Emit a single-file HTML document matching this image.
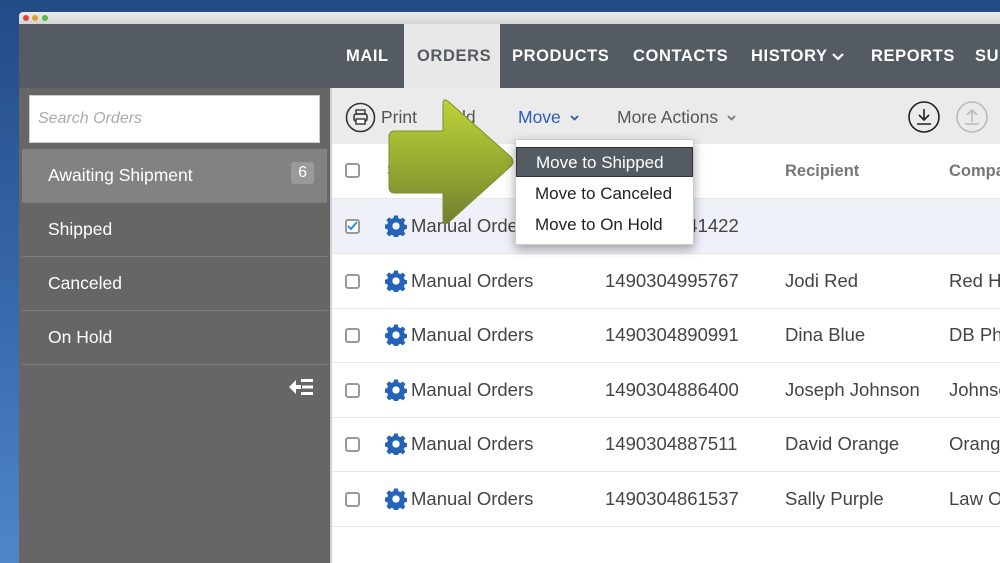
<!DOCTYPE html>
<html><head><meta charset="utf-8"><style>
*{margin:0;padding:0;box-sizing:border-box}
body{width:1000px;height:563px;overflow:hidden;position:relative;font-family:"Liberation Sans",sans-serif;background:linear-gradient(180deg,#234b86 0%,#3a6cb0 60%,#4f86c8 100%)}
.abs{position:absolute}
.title{left:19px;top:12px;width:981px;height:12px;background:linear-gradient(#ececec,#d4d4d4);border-radius:4px 0 0 0}
.dot{top:15px;width:6px;height:6px;border-radius:50%}
.nav{left:19px;top:24px;width:981px;height:64px;background:#555b62}
.nt{position:absolute;top:47px;color:#fff;font-weight:bold;font-size:16.5px;letter-spacing:.6px;white-space:nowrap}
.tab{left:404px;top:24px;width:96px;height:64px;background:#e8e8e8}
.side{left:19px;top:88px;width:311px;height:475px;background:#666}
.search{left:29px;top:95px;width:291px;height:48px;background:#fff;border:1px solid #ccc;color:#aaa;font-style:italic;font-size:16px;padding:14px 8px}
.item{left:22px;width:305px;height:54px;color:#fff;font-size:17.5px;padding:16px 26px;border-bottom:1px solid #7d7d7d}
.main{left:330px;top:88px;width:670px;height:475px;background:#fff;border-left:2px solid #d0d0d0}
.tool{left:332px;top:88px;width:668px;height:56px;background:#ebebeb}
.tt{top:107px;font-size:17.5px;color:#555}
.row{left:332px;width:668px;height:55px;border-bottom:1px solid #e6e6e6}
.cb{position:absolute;left:13px;top:20px;width:15px;height:15px;border:2px solid #999;border-radius:3px;background:#fff}
.cell{position:absolute;top:16px;font-size:18.5px;color:#444;white-space:nowrap}
.gear{position:absolute;left:53px;top:16px}
.menu{left:515px;top:139px;width:179px;height:106px;background:#fff;border:1px solid #ccc;box-shadow:0 4px 10px rgba(0,0,0,.35)}
.mi{position:absolute;left:0;width:177px;height:30px;font-size:17px;color:#222;padding:5px 19px}
</style></head><body>
<div class="abs title"></div>
<div class="abs dot" style="left:23px;background:#e0443c"></div>
<div class="abs dot" style="left:32px;background:#e0a42a"></div>
<div class="abs dot" style="left:42px;background:#5bb644"></div>
<div class="abs nav"></div>
<div class="abs tab"></div>
<div class="nt" style="left:346px">MAIL</div>
<div class="nt" style="left:417px;color:#555b62">ORDERS</div>
<div class="nt" style="left:512px">PRODUCTS</div>
<div class="nt" style="left:633px">CONTACTS</div>
<div class="nt" style="left:751px">HISTORY</div>
<svg class="abs" style="left:832px;top:53px" width="12" height="8"><path d="M1 1 L6 6 L11 1" stroke="#fff" stroke-width="2.2" fill="none"/></svg>
<div class="nt" style="left:871px">REPORTS</div>
<div class="nt" style="left:975px">SU</div>
<div class="abs side"></div>
<div class="abs search">Search Orders</div>
<div class="abs item" style="top:149px;background:#828282">Awaiting Shipment<span style="position:absolute;right:13px;top:13px;background:#9a9a9a;border-radius:3px;padding:2px 7px;font-size:16px">6</span></div>
<div class="abs item" style="top:203px">Shipped</div>
<div class="abs item" style="top:257px">Canceled</div>
<div class="abs item" style="top:311px">On Hold</div>
<svg class="abs" style="left:289px;top:378px" width="25" height="18" viewBox="0 0 25 18"><path d="M0 9 L7 2 L7 7 L12 7 L12 11 L7 11 L7 16Z" fill="#fff"/><rect x="12" y="1" width="12" height="3" fill="#fff"/><rect x="13" y="7.5" width="11" height="3" fill="#fff"/><rect x="12" y="14" width="12" height="3" fill="#fff"/></svg>
<div class="abs main"></div>
<div class="abs tool"></div>
<svg class="abs" style="left:345px;top:102px" width="31" height="31"><circle cx="15.5" cy="15.5" r="14" fill="none" stroke="#333" stroke-width="1.6"/><rect x="9" y="12" width="13" height="7" rx="2" fill="none" stroke="#333" stroke-width="1.5"/><rect x="11" y="8" width="9" height="4" fill="none" stroke="#333" stroke-width="1.4"/><rect x="11" y="17" width="9" height="5" fill="#fff" stroke="#333" stroke-width="1.4"/></svg>
<div class="abs tt" style="left:381px">Print</div>
<div class="abs tt" style="left:462px">ld</div>
<div class="abs tt" style="left:518px;color:#2a5db0">Move</div>
<svg class="abs" style="left:570px;top:115px" width="9" height="6"><path d="M1 1 L4.5 4.5 L8 1" stroke="#2a5db0" stroke-width="1.8" fill="none"/></svg>
<div class="abs tt" style="left:617px">More Actions</div>
<svg class="abs" style="left:727px;top:115px" width="9" height="6"><path d="M1 1 L4.5 4.5 L8 1" stroke="#777" stroke-width="1.8" fill="none"/></svg>
<svg class="abs" style="left:907px;top:100px" width="34" height="34"><circle cx="17" cy="17" r="15" fill="none" stroke="#222" stroke-width="1.6"/><path d="M17 9 V20 M12 15 L17 20 L22 15 M10 24 H24" fill="none" stroke="#222" stroke-width="1.6"/></svg>
<svg class="abs" style="left:955px;top:100px" width="34" height="34"><circle cx="17" cy="17" r="15" fill="none" stroke="#bbb" stroke-width="1.6"/><path d="M17 22 V10 M12 15 L17 10 L22 15 M10 24 H24" fill="none" stroke="#bbb" stroke-width="1.6"/></svg>

<div class="abs row" style="top:144px"><div class="cb" style="top:19px"></div><div class="cell" style="left:55px;font-weight:bold;color:#777;font-size:16px;top:18px">S</div><div class="cell" style="left:453px;font-weight:bold;color:#777;font-size:16.5px;top:18px">Recipient</div><div class="cell" style="left:617px;font-weight:bold;color:#777;font-size:16.5px;top:18px">Compa</div></div>
<div class="abs row" style="top:199px;background:#eef1f8"><div class="cb" style="border-color:#999"><svg width="11" height="11" style="position:absolute;left:0;top:0"><path d="M1 5 L4 8 L10 1" stroke="#2a8fd8" stroke-width="2" fill="none"/></svg></div><svg class="gear" width="22" height="22" viewBox="0 0 24 24"><path fill="#2563b8" d="M10 1h4l.6 3 2.2 1 2.6-1.7 2.8 2.8L20.5 8.8l1 2.2 3 .6v4l-3 .6-1 2.2 1.7 2.6-2.8 2.8-2.6-1.7-2.2 1-.6 3h-4l-.6-3-2.2-1-2.6 1.7L1.6 20.6 3.3 18l-1-2.2-3-.6v-4l3-.6 1-2.2L1.6 5.9 4.4 3.1 7 4.8l2.2-1z" transform="translate(0 -.5)"/><circle cx="12" cy="12" r="4" fill="#eef1f8"/></svg><div class="cell" style="left:79px">Manual Orders</div><div class="cell" style="left:273px">1490304841422</div></div>
<div class="abs row" style="top:254px"><div class="cb"></div><svg class="gear" width="22" height="22" viewBox="0 0 24 24"><path fill="#2563b8" d="M10 1h4l.6 3 2.2 1 2.6-1.7 2.8 2.8L20.5 8.8l1 2.2 3 .6v4l-3 .6-1 2.2 1.7 2.6-2.8 2.8-2.6-1.7-2.2 1-.6 3h-4l-.6-3-2.2-1-2.6 1.7L1.6 20.6 3.3 18l-1-2.2-3-.6v-4l3-.6 1-2.2L1.6 5.9 4.4 3.1 7 4.8l2.2-1z" transform="translate(0 -.5)"/><circle cx="12" cy="12" r="4" fill="#fff"/></svg><div class="cell" style="left:79px">Manual Orders</div><div class="cell" style="left:273px">1490304995767</div><div class="cell" style="left:453px">Jodi Red</div><div class="cell" style="left:617px">Red H</div></div>
<div class="abs row" style="top:308px"><div class="cb"></div><svg class="gear" width="22" height="22" viewBox="0 0 24 24"><path fill="#2563b8" d="M10 1h4l.6 3 2.2 1 2.6-1.7 2.8 2.8L20.5 8.8l1 2.2 3 .6v4l-3 .6-1 2.2 1.7 2.6-2.8 2.8-2.6-1.7-2.2 1-.6 3h-4l-.6-3-2.2-1-2.6 1.7L1.6 20.6 3.3 18l-1-2.2-3-.6v-4l3-.6 1-2.2L1.6 5.9 4.4 3.1 7 4.8l2.2-1z" transform="translate(0 -.5)"/><circle cx="12" cy="12" r="4" fill="#fff"/></svg><div class="cell" style="left:79px">Manual Orders</div><div class="cell" style="left:273px">1490304890991</div><div class="cell" style="left:453px">Dina Blue</div><div class="cell" style="left:617px">DB Ph</div></div>
<div class="abs row" style="top:363px"><div class="cb"></div><svg class="gear" width="22" height="22" viewBox="0 0 24 24"><path fill="#2563b8" d="M10 1h4l.6 3 2.2 1 2.6-1.7 2.8 2.8L20.5 8.8l1 2.2 3 .6v4l-3 .6-1 2.2 1.7 2.6-2.8 2.8-2.6-1.7-2.2 1-.6 3h-4l-.6-3-2.2-1-2.6 1.7L1.6 20.6 3.3 18l-1-2.2-3-.6v-4l3-.6 1-2.2L1.6 5.9 4.4 3.1 7 4.8l2.2-1z" transform="translate(0 -.5)"/><circle cx="12" cy="12" r="4" fill="#fff"/></svg><div class="cell" style="left:79px">Manual Orders</div><div class="cell" style="left:273px">1490304886400</div><div class="cell" style="left:453px">Joseph Johnson</div><div class="cell" style="left:617px">Johnso</div></div>
<div class="abs row" style="top:417px"><div class="cb"></div><svg class="gear" width="22" height="22" viewBox="0 0 24 24"><path fill="#2563b8" d="M10 1h4l.6 3 2.2 1 2.6-1.7 2.8 2.8L20.5 8.8l1 2.2 3 .6v4l-3 .6-1 2.2 1.7 2.6-2.8 2.8-2.6-1.7-2.2 1-.6 3h-4l-.6-3-2.2-1-2.6 1.7L1.6 20.6 3.3 18l-1-2.2-3-.6v-4l3-.6 1-2.2L1.6 5.9 4.4 3.1 7 4.8l2.2-1z" transform="translate(0 -.5)"/><circle cx="12" cy="12" r="4" fill="#fff"/></svg><div class="cell" style="left:79px">Manual Orders</div><div class="cell" style="left:273px">1490304887511</div><div class="cell" style="left:453px">David Orange</div><div class="cell" style="left:617px">Orang</div></div>
<div class="abs row" style="top:472px"><div class="cb"></div><svg class="gear" width="22" height="22" viewBox="0 0 24 24"><path fill="#2563b8" d="M10 1h4l.6 3 2.2 1 2.6-1.7 2.8 2.8L20.5 8.8l1 2.2 3 .6v4l-3 .6-1 2.2 1.7 2.6-2.8 2.8-2.6-1.7-2.2 1-.6 3h-4l-.6-3-2.2-1-2.6 1.7L1.6 20.6 3.3 18l-1-2.2-3-.6v-4l3-.6 1-2.2L1.6 5.9 4.4 3.1 7 4.8l2.2-1z" transform="translate(0 -.5)"/><circle cx="12" cy="12" r="4" fill="#fff"/></svg><div class="cell" style="left:79px">Manual Orders</div><div class="cell" style="left:273px">1490304861537</div><div class="cell" style="left:453px">Sally Purple</div><div class="cell" style="left:617px">Law O</div></div>

<svg class="abs" style="left:385px;top:94px" width="135" height="140"><defs><linearGradient id="g" x1="0" y1="0" x2="0" y2="1"><stop offset="0" stop-color="#bed23a"/><stop offset=".5" stop-color="#98ad32"/><stop offset="1" stop-color="#6f8030"/></linearGradient></defs><path d="M10 37 H58 V10 Q58 3 64 8 L126 63 Q130 68 126 72 L64 128 Q58 133 58 126 V99 H10 Q4 99 4 93 V43 Q4 37 10 37Z" fill="url(#g)" stroke="#7c8f2a" stroke-width="1"/></svg>

<div class="abs menu">
<div class="mi" style="top:7px;background:#555b62;color:#fff;border:1px solid #333">Move to Shipped</div>
<div class="mi" style="top:39px">Move to Canceled</div>
<div class="mi" style="top:70px">Move to On Hold</div>
</div>
</body></html>
